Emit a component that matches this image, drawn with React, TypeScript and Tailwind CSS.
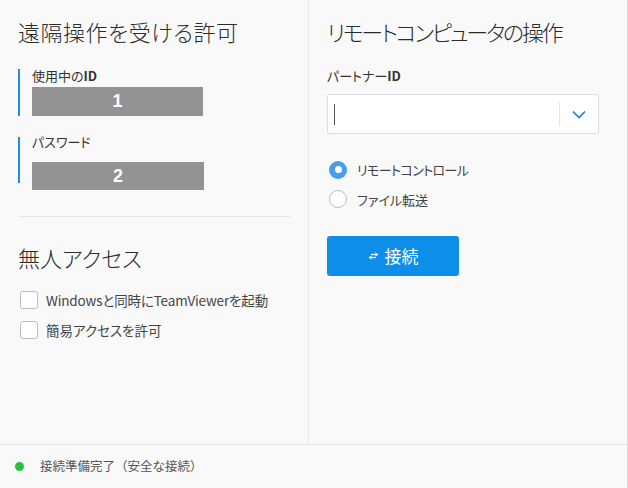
import React from "react";

const font = { fontFamily: '"Noto Sans CJK JP", "Noto Sans", sans-serif' };
const digitFont = { fontFamily: '"Liberation Sans", Arial, sans-serif' };

export default function App() {
  return (
    <div
      className="w-[628px] h-[488px] bg-[#f9f9f9] flex flex-col text-[#333] overflow-hidden border-r border-[#d8d8d8] [font-feature-settings:'palt']"
      style={font}
    >
      <div className="flex flex-1 border-b border-[#e6e6e6]">
        {/* Left panel */}
        <div className="w-[309px] border-r border-[#e6e6e6] pl-[18px] pr-[18px] pt-[16px]">
          <h1 className="text-[22px] leading-[30px] text-[#2b2b2b] font-light tracking-[0.5px]">遠隔操作を受ける許可</h1>
          <div className="mt-[23px] flex">
            <div className="w-[2px] h-[47px] bg-[#1a8fe3]"></div>
            <div className="ml-[12px]">
              <div className="text-[13px] leading-[16px] mt-[-1px] text-[#333]">
                使用中の<span className="font-bold">ID</span>
              </div>
              <div
                className="mt-[3px] w-[171px] h-[29px] bg-[#939393] text-white font-bold text-[18px] flex items-center justify-center"
                style={digitFont}
              >
                1
              </div>
            </div>
          </div>
          <div className="mt-[21px] flex">
            <div className="w-[2px] h-[46px] bg-[#1a8fe3]"></div>
            <div className="ml-[12px]">
              <div className="text-[13px] leading-[16px] mt-[-3px] text-[#333]">パスワード</div>
              <div
                className="mt-[12px] w-[172px] h-[28px] bg-[#939393] text-white font-bold text-[18px] flex items-center justify-center"
                style={digitFont}
              >
                2
              </div>
            </div>
          </div>
          <div className="mt-[26px] h-px bg-[#e4e4e4] w-[272px]"></div>
          <h2 className="mt-[25px] text-[22px] leading-[30px] text-[#2b2b2b] font-light">無人アクセス</h2>
          <div className="mt-[18px] flex flex-col gap-[10px] pl-[2px]">
            <label className="flex items-center gap-[8px]">
              <span className="w-[18px] h-[18px] bg-white border border-[#bdbdbd] rounded-[3px]"></span>
              <span className="text-[13.5px] text-[#444] tracking-[-0.15px]">Windowsと同時にTeamViewerを起動</span>
            </label>
            <label className="flex items-center gap-[8px]">
              <span className="w-[18px] h-[18px] bg-white border border-[#bdbdbd] rounded-[3px]"></span>
              <span className="text-[13.5px] text-[#444]">簡易アクセスを許可</span>
            </label>
          </div>
        </div>
        {/* Right panel */}
        <div className="flex-1 pl-[18px] pt-[16px]">
          <h1 className="text-[22px] leading-[30px] text-[#2b2b2b] font-light tracking-[-2.2px]">リモートコンピュータの操作</h1>
          <div className="mt-[22px] text-[13px] leading-[16px] text-[#333]">
            パートナー<span className="font-bold">ID</span>
          </div>
          <div className="mt-[10px] w-[272px] h-[40px] bg-white border border-[#dcdcdc] rounded-[2px] flex items-center">
            <div className="ml-[6px] w-px h-[21px] bg-[#555]"></div>
            <div className="flex-1"></div>
            <div className="w-px h-[24px] bg-[#e6e6e6]"></div>
            <div className="w-[38px] flex items-center justify-center">
              <svg width="14" height="9" viewBox="0 0 14 9">
                <path d="M1 1.5 L7 7.5 L13 1.5" fill="none" stroke="#1a7fd1" strokeWidth="1.6" />
              </svg>
            </div>
          </div>
          <div className="mt-[26px] flex flex-col gap-[10px] pl-[2px]">
            <div className="flex items-center gap-[10px]">
              <span className="w-[18px] h-[18px] rounded-full bg-[#4a9cef] flex items-center justify-center">
                <span className="w-[7px] h-[7px] rounded-full bg-white"></span>
              </span>
              <span className="text-[13px] text-[#444] tracking-[-0.6px]">リモートコントロール</span>
            </div>
            <div className="flex items-center gap-[10px]">
              <span className="w-[18px] h-[18px] rounded-full bg-white border border-[#bdbdbd]"></span>
              <span className="text-[13px] text-[#444]">ファイル転送</span>
            </div>
          </div>
          <button className="mt-[27px] w-[132px] h-[40px] bg-[#0c8ee9] rounded-[3px] text-white flex items-center justify-center gap-[6px]">
            <svg width="11" height="8" viewBox="0 0 11 8">
              <path d="M3 2.5 H8" stroke="white" strokeWidth="1.3" />
              <path d="M7.5 0.5 L10.5 2.5 L7.5 4.5 Z" fill="white" />
              <path d="M3 5.5 H8" stroke="white" strokeWidth="1.3" />
              <path d="M3.5 3.5 L0.5 5.5 L3.5 7.5 Z" fill="white" />
            </svg>
            <span className="text-[17px]">接続</span>
          </button>
        </div>
      </div>
      <div className="h-[43px] flex items-center pl-[15px]">
        <span className="w-[9px] h-[9px] rounded-full bg-[#27c03f]"></span>
        <span className="ml-[16px] text-[12.5px] text-[#555] [font-feature-settings:normal]">接続準備完了（安全な接続）</span>
      </div>
    </div>
  );
}
